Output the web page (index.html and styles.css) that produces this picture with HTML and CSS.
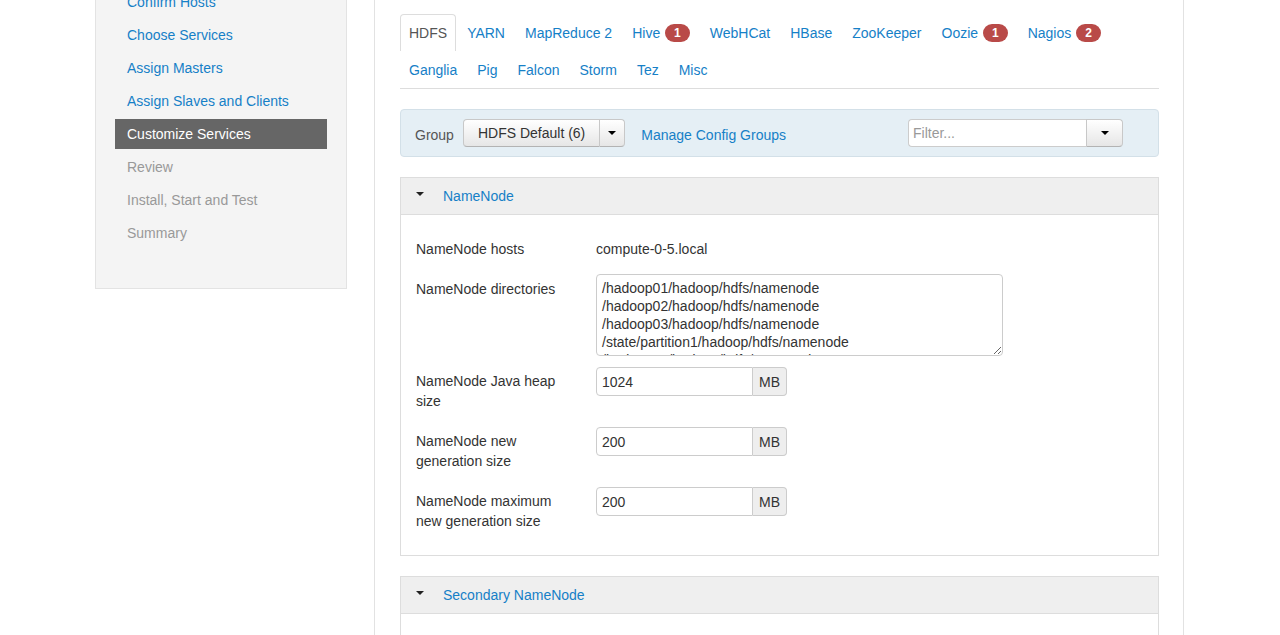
FILE: index.html
```html
<!DOCTYPE html>
<html>
<head>
<meta charset="utf-8">
<link rel="stylesheet" href="styles.css">
</head>
<body>
<div class="page">
  <aside class="wizard-nav">
    <ul class="steps">
      <li><a class="step link">Confirm Hosts</a></li>
      <li><a class="step link">Choose Services</a></li>
      <li><a class="step link">Assign Masters</a></li>
      <li><a class="step link">Assign Slaves and Clients</a></li>
      <li><a class="step active">Customize Services</a></li>
      <li><a class="step disabled">Review</a></li>
      <li><a class="step disabled">Install, Start and Test</a></li>
      <li><a class="step disabled">Summary</a></li>
    </ul>
  </aside>
  <main class="content">
    <ul class="tabs">
      <li class="tab active"><a>HDFS</a></li>
      <li class="tab"><a>YARN</a></li>
      <li class="tab"><a>MapReduce 2</a></li>
      <li class="tab"><a>Hive <span class="badge">1</span></a></li>
      <li class="tab"><a>WebHCat</a></li>
      <li class="tab"><a>HBase</a></li>
      <li class="tab"><a>ZooKeeper</a></li>
      <li class="tab"><a>Oozie <span class="badge">1</span></a></li>
      <li class="tab"><a>Nagios <span class="badge">2</span></a></li>
      <li class="tab"><a>Ganglia</a></li>
      <li class="tab"><a>Pig</a></li>
      <li class="tab"><a>Falcon</a></li>
      <li class="tab"><a>Storm</a></li>
      <li class="tab"><a>Tez</a></li>
      <li class="tab"><a>Misc</a></li>
    </ul>

    <div class="group-bar">
      <span class="group-label">Group</span>
      <div class="btn-group">
        <button class="btn btn-main">HDFS Default (6)</button>
        <button class="btn btn-caret"><span class="caret"></span></button>
      </div>
      <a class="link manage">Manage Config Groups</a>
      <div class="filter">
        <input class="filter-input" type="text" placeholder="Filter...">
        <button class="btn filter-btn"><span class="caret"></span></button>
      </div>
    </div>

    <section class="panel">
      <div class="panel-head"><span class="caret dark"></span><a class="link">NameNode</a></div>
      <div class="panel-body">
        <div class="row">
          <div class="label">NameNode hosts</div>
          <div class="value">compute-0-5.local</div>
        </div>
        <div class="row">
          <div class="label">NameNode directories</div>
          <textarea class="dirs">/hadoop01/hadoop/hdfs/namenode
/hadoop02/hadoop/hdfs/namenode
/hadoop03/hadoop/hdfs/namenode
/state/partition1/hadoop/hdfs/namenode
/hadoop04/hadoop/hdfs/namenode</textarea>
        </div>
        <div class="row field">
          <div class="label">NameNode Java heap size</div>
          <div class="input-append"><input class="num" type="text" value="1024"><span class="addon">MB</span></div>
        </div>
        <div class="row field">
          <div class="label">NameNode new generation size</div>
          <div class="input-append"><input class="num" type="text" value="200"><span class="addon">MB</span></div>
        </div>
        <div class="row field">
          <div class="label">NameNode maximum new generation size</div>
          <div class="input-append"><input class="num" type="text" value="200"><span class="addon">MB</span></div>
        </div>
      </div>
    </section>

    <section class="panel">
      <div class="panel-head"><span class="caret dark"></span><a class="link">Secondary NameNode</a></div>
      <div class="panel-body tall"></div>
    </section>
  </main>
</div>
</body>
</html>
```

FILE: styles.css
```css
* { box-sizing: border-box; }
html, body { margin: 0; padding: 0; background: #fff; }
body {
  font-family: "Liberation Sans", Arial, Helvetica, sans-serif;
  font-size: 14px;
  line-height: 20px;
  color: #333;
  overflow: hidden;
  height: 635px;
}
.page {
  display: flex;
  align-items: flex-start;
  padding-left: 95px;
  gap: 27px;
}
.link { color: #1680c7; text-decoration: none; cursor: pointer; }

/* sidebar */
.wizard-nav {
  width: 252px;
  margin-top: -34px;
  background: #f4f4f4;
  border: 1px solid #e3e3e3;
  padding: 20px 19px 37px;
}
.steps { list-style: none; margin: 0; padding: 0; }
.steps li { margin-bottom: 3px; }
.step {
  display: block;
  padding: 5px 12px 5px;
  line-height: 20px;
}
.step.active { background: #666; color: #fff; }
.step.disabled { color: #999; }

/* main */
.content {
  width: 810px;
  min-height: 700px;
  border-left: 1px solid #e2e2e2;
  border-right: 1px solid #e2e2e2;
  padding: 14px 24px 0 25px;
}
.tabs {
  list-style: none;
  margin: 0;
  padding: 0;
  display: flex;
  flex-wrap: wrap;
  border-bottom: 1px solid #ddd;
}
.tab a {
  display: block;
  padding: 8px 8px;
  margin-right: 2px;
  line-height: 20px;
  border: 1px solid transparent;
  border-bottom: 0;
  color: #1680c7;
  border-radius: 4px 4px 0 0;
}
.tab.active a {
  color: #555;
  border-color: #ddd;
  background: #fff;
}
.badge {
  display: inline-block;
  background: #b94a48;
  color: #fff;
  font-size: 12px;
  font-weight: bold;
  line-height: 14px;
  padding: 2px 9px;
  border-radius: 9px;
  margin-left: 1px;
  vertical-align: 1px;
}

/* group bar */
.group-bar {
  margin-top: 20px;
  display: flex;
  align-items: center;
  background: #e5eff5;
  border: 1px solid #d3e0e8;
  border-radius: 4px;
  padding: 9px 14px;
}
.group-label { color: #555; margin-right: 9px; padding-top: 3px; }
.btn-group { display: flex; }
.btn {
  font-family: inherit;
  font-size: 14px;
  line-height: 20px;
  color: #333;
  height: 28px;
  background: linear-gradient(#ffffff, #e6e6e6);
  border: 1px solid #c8c8c8;
  border-bottom-color: #b3b3b3;
  margin: 0;
  cursor: pointer;
}
.btn-main { padding: 3px 14px; border-radius: 4px 0 0 4px; }
.btn-caret { width: 25px; padding: 0; border-left: 0; border-radius: 0 4px 4px 0; display: flex; align-items: center; justify-content: center; }
.caret {
  display: inline-block;
  width: 0; height: 0;
  border-left: 4px solid transparent;
  border-right: 4px solid transparent;
  border-top: 4px solid #000;
}
.manage { margin-left: 16px; padding-top: 3px; }
.filter { display: flex; margin-left: auto; margin-right: 21px; }
.filter-input {
  width: 178px;
  height: 28px;
  border: 1px solid #ccc;
  border-right: 0;
  border-radius: 4px 0 0 4px;
  padding: 4px 4px;
  font-family: inherit;
  font-size: 14px;
  color: #555;
  outline: none;
}
.filter-input::placeholder { color: #999; }
.filter-btn { width: 37px; padding: 0; border-radius: 0 4px 4px 0; display: flex; align-items: center; justify-content: center; }

/* panels */
.panel {
  margin-top: 20px;
  border: 1px solid #ddd;
}
.panel-head {
  background: #efefef;
  border-bottom: 1px solid #ddd;
  height: 37px;
  display: flex;
  align-items: center;
  padding-left: 15px;
  padding-bottom: 1px;
}
.panel-head .caret.dark { border-top-color: #222; margin-right: 19px; margin-top: -4px; }
.panel-body { padding: 19px 15px 8px; }
.panel-body.tall { height: 120px; }
.row { display: flex; align-items: flex-start; margin-bottom: 10px; }
.label { width: 160px; margin-right: 20px; padding: 5px 0; line-height: 20px; }
.row.field .label { padding: 4px 0 6px; }
.value { padding: 5px 0; }
.dirs {
  width: 407px;
  height: 82px;
  border: 1px solid #ccc;
  border-radius: 4px;
  padding: 4px 5px;
  font-family: inherit;
  font-size: 14px;
  line-height: 18px;
  color: #333;
  overflow: hidden;
  margin: 0 0 1px;
}
.input-append { display: flex; }
.num {
  width: 157px;
  height: 29px;
  border: 1px solid #ccc;
  border-radius: 4px 0 0 4px;
  padding: 4px 5px;
  font-family: inherit;
  font-size: 14px;
  color: #333;
  margin: 0;
}
.addon {
  width: 34px;
  height: 29px;
  border: 1px solid #ccc;
  border-left: 0;
  background: #eee;
  border-radius: 0 4px 4px 0;
  padding: 4px 5px;
  text-align: center;
  line-height: 20px;
}
```
